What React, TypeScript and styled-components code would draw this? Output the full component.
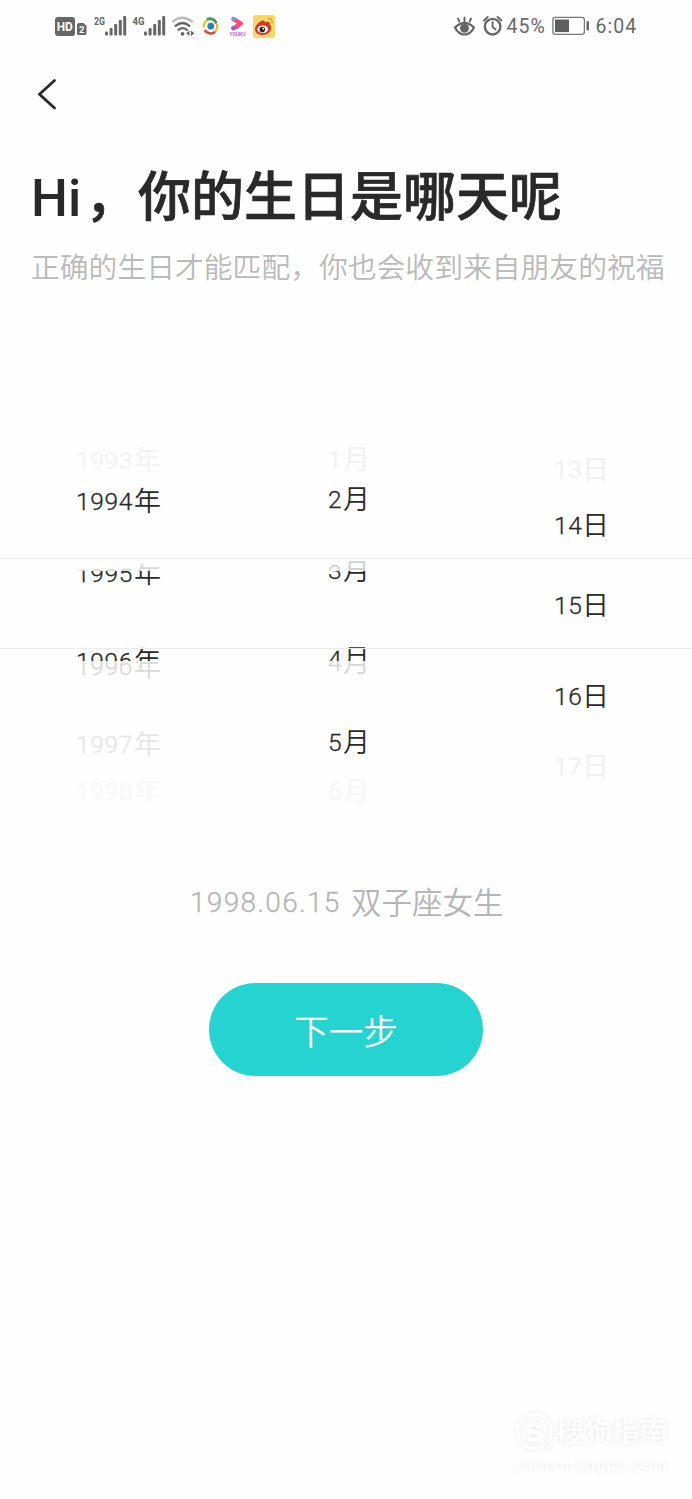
import React from 'react';
import styled, { createGlobalStyle } from 'styled-components';

const GlobalStyle = createGlobalStyle`
  * { box-sizing: border-box; }
  body { margin: 0; background: #fefefe; }
`;

const Screen = styled.main`
  width: 692px;
  height: 1499px;
  overflow: hidden;
  display: flex;
  flex-direction: column;
  background: #fefefe;
  color: #292929;
  font-family: Roboto, 'Noto Sans CJK SC', sans-serif;
`;

const StatusBar = styled.header`
  height: 52px;
  flex: none;
  display: flex;
  justify-content: space-between;
  padding: 0 55px 0 54px;
  color: #666;
`;

const StatusGroup = styled.div`
  display: flex;
  align-items: center;
`;

const StatusText = styled.span<{ $width: number; $inset: number }>`
  width: ${p => p.$width}px;
  padding: 2px 0 0 ${p => p.$inset}px;
  font-size: 19.5px;
  line-height: 52px;
  letter-spacing: 1px;
  white-space: nowrap;
`;

const BackButton = styled.button`
  width: 24px;
  height: 34px;
  margin: 25px 0 0 35px;
  padding: 0;
  border: 0;
  background: none;
  flex: none;
  svg { display: block; }
`;

const Title = styled.h1`
  margin: 50px 0 0 31px;
  height: 76px;
  line-height: 65px;
  font-size: 53px;
  font-weight: 500;
  font-family: 'Noto Sans CJK SC', sans-serif;
  -webkit-text-stroke: 0.7px #292929;
  display: flex;
  white-space: nowrap;
`;

const Greeting = styled.span`
  width: 54px;
  font-family: Roboto, sans-serif;
  font-size: 52px;
  line-height: 75px;
  -webkit-text-stroke: 0;
`;

const Subtitle = styled.p`
  margin: 11px 0 0 31px;
  height: 40px;
  line-height: 36px;
  font-size: 28.8px;
  font-weight: 350;
  font-family: 'Noto Sans CJK SC', sans-serif;
  color: #b9b9b9;
  white-space: nowrap;
`;

const Picker = styled.section`
  position: relative;
  margin-top: 152px;
  height: 380px;
  flex: none;
  display: flex;
`;

const SelectionFrame = styled.div`
  position: absolute;
  left: 0;
  right: 0;
  top: 118px;
  height: 91px;
  border-top: 1px solid #ebebeb;
  border-bottom: 1px solid #ebebeb;
`;

const Wheel = styled.div<{ $width: number; $inset: number }>`
  width: ${p => p.$width}px;
  padding-left: ${p => p.$inset}px;
`;

const Slot = styled.div<{ $height: number }>`
  height: ${p => p.$height}px;
  overflow: hidden;
`;

const SlotLabel = styled.div<{ $shift: number; $tone: string }>`
  margin-top: ${p => p.$shift}px;
  height: 40px;
  line-height: 38px;
  display: flex;
  color: ${p => p.$tone};
  font-size: 27px;
  white-space: nowrap;
`;

const Digits = styled.span<{ $size: number; $spacing: number; $width?: number }>`
  font-size: ${p => p.$size}px;
  font-weight: 300;
  -webkit-text-stroke: 0.3px currentColor;
  letter-spacing: ${p => p.$spacing}px;
  width: ${p => (p.$width ? `${p.$width}px` : 'auto')};
  padding-top: 2px;
`;

const Unit = styled.span`
  font-family: 'Noto Sans CJK SC', sans-serif;
  font-weight: 350;
`;

const Summary = styled.div`
  margin: 62px 0 0 190px;
  height: 40px;
  line-height: 38px;
  display: flex;
  flex: none;
  color: #b5b5b5;
  font-size: 30.5px;
  white-space: nowrap;
`;

const NextButton = styled.button`
  margin: 61px 0 0 209px;
  width: 274px;
  height: 93px;
  flex: none;
  border: 0;
  border-radius: 47px;
  padding: 0;
  background: #25d3d0;
  color: #fff;
  font: 350 34.7px/50px 'Noto Sans CJK SC', sans-serif;
`;

const Watermark = styled.footer`
  margin: auto 0 23px 515px;
  width: 160px;
  color: #fff;
  filter: drop-shadow(0 0 2px rgba(0, 0, 0, 0.09));
`;

const WatermarkBrand = styled.div`
  display: flex;
  align-items: center;
  gap: 2px;
  height: 42px;
  line-height: 38px;
  font-size: 28px;
  font-weight: 500;
  white-space: nowrap;
`;

const WatermarkUrl = styled.div`
  font: 700 14px/22px 'Liberation Sans', sans-serif;
  letter-spacing: 1.9px;
`;

type SlotData = { text: string; unit: string; end: number; center: number; tone: string };

const DARK = '#292929';
const TOP = 440;

const years: SlotData[] = [
  { text: '1993', unit: '年', end: 480, center: 459.5, tone: '#f2f2f2' },
  { text: '1994', unit: '年', end: 530, center: 501, tone: DARK },
  { text: '1995', unit: '年', end: 571, center: 576.5, tone: '#d6d6d6' },
  { text: '1995', unit: '年', end: 600, center: 573.3, tone: DARK },
  { text: '1996', unit: '年', end: 661, center: 661, tone: DARK },
  { text: '1996', unit: '年', end: 700, center: 665.6, tone: '#d9d9d9' },
  { text: '1997', unit: '年', end: 768, center: 744.3, tone: '#e6e6e6' },
  { text: '1998', unit: '年', end: 820, center: 791, tone: '#f7f7f7' },
];

const months: SlotData[] = [
  { text: '1', unit: '月', end: 478, center: 458.7, tone: '#f0f0f0' },
  { text: '2', unit: '月', end: 530, center: 499, tone: DARK },
  { text: '3', unit: '月', end: 571, center: 573, tone: '#d0d0d0' },
  { text: '3', unit: '月', end: 600, center: 570, tone: DARK },
  { text: '4', unit: '月', end: 661, center: 658.6, tone: DARK },
  { text: '4', unit: '月', end: 700, center: 662, tone: '#d6d6d6' },
  { text: '5', unit: '月', end: 766, center: 741.5, tone: DARK },
  { text: '6', unit: '月', end: 820, center: 791, tone: '#f5f5f5' },
];

const days: SlotData[] = [
  { text: '13', unit: '日', end: 495, center: 469.3, tone: '#efefef' },
  { text: '14', unit: '日', end: 556, center: 525.3, tone: DARK },
  { text: '15', unit: '日', end: 650, center: 604.7, tone: DARK },
  { text: '16', unit: '日', end: 730, center: 696.3, tone: DARK },
  { text: '17', unit: '日', end: 820, center: 765.5, tone: '#efefef' },
];

function WheelColumn({ items, width, inset, digitsWidth }: {
  items: SlotData[]; width: number; inset: number; digitsWidth: number;
}) {
  return (
    <Wheel $width={width} $inset={inset}>
      {items.map((item, i) => {
        const start = i === 0 ? TOP : items[i - 1].end;
        return (
          <Slot key={i} $height={item.end - start}>
            <SlotLabel $shift={item.center - start - 20} $tone={item.tone}>
              <Digits $size={24.5} $spacing={0.7} $width={digitsWidth}>{item.text}</Digits>
              <Unit>{item.unit}</Unit>
            </SlotLabel>
          </Slot>
        );
      })}
    </Wheel>
  );
}

const SignalIcons = () => (
  <svg width="224" height="32" viewBox="54 10 224 32" fill="#666">
    <rect x="55" y="17" width="20" height="19" rx="3" />
    <text x="56.8" y="31" fontSize="12" fontWeight="700" fill="#fff" textLength="16" lengthAdjust="spacingAndGlyphs">HD</text>
    <path d="M77 25q0-2 2-2h4.500l3 3v7.500q0 1.500-1.500 1.500h-6.500q-1.500 0-1.500-1.500z" />
    <text x="79" y="33" fontSize="9.500" fontWeight="700" fill="#fff">2</text>
    <text x="94" y="25" fontSize="11" fontWeight="700" textLength="11" lengthAdjust="spacingAndGlyphs">2G</text>
    <text x="132.500" y="25" fontSize="11" fontWeight="700" textLength="12" lengthAdjust="spacingAndGlyphs">4G</text>
    {[105, 144].map(x => (
      <g key={x}>
        <rect x={x} y="31.500" width="3" height="4" rx="1" />
        <rect x={x + 4.6} y="28" width="3" height="7.500" rx="1" />
        <rect x={x + 9.2} y="24" width="3" height="11.500" rx="1" />
        <rect x={x + 13.8} y="20" width="3" height="15.500" rx="1" />
        <rect x={x + 18.2} y="16" width="3" height="19.500" rx="1" />
      </g>
    ))}
    <g fill="none" strokeLinecap="round" strokeWidth="2.200">
      <path d="M173 21.500q9-7.500 19 0" stroke="#bbb" />
      <path d="M175.500 25.800q7-5.600 14 0" stroke="#666" />
      <path d="M178.500 29.800q4-3.200 8.500 0" stroke="#666" />
    </g>
    <circle cx="182.500" cy="33.800" r="1.900" />
    <path d="M189.500 30.500v5.500l-3.300-2.700zM191 30.500v5.500l3.300-2.700z" />
    <g fill="none" strokeWidth="2.600">
      <path d="M204 27.500a6.800 6.800 0 0 1 4-7.800" stroke="#e9c43e" />
      <path d="M207 19.200a7 7 0 0 1 9.500 4.300" stroke="#3d9a4d" />
      <path d="M216.900 24a7 7 0 0 1-3.600 8.500" stroke="#e5c22c" />
      <path d="M215 32a7 7 0 0 1-10.300-2" stroke="#d34c3d" />
    </g>
    <circle cx="210.800" cy="26.200" r="3.400" fill="#2e80bd" />
    <path d="M233.200 28.200l4-1.800" fill="none" stroke="#8d63cc" strokeWidth="4.400" strokeLinecap="round" />
    <path d="M233.500 19l7.300 4.500-4 2.800" fill="none" stroke="#f54b83" strokeWidth="4.400" strokeLinecap="round" strokeLinejoin="round" />
    <path d="M233 18.300l1.200.7" fill="none" stroke="#35b9ea" strokeWidth="2.600" strokeLinecap="round" />
    <text x="229.500" y="35.600" fontSize="5.200" fontWeight="700" fill="#b06fc4" textLength="16" lengthAdjust="spacingAndGlyphs">YOUKU</text>
    <rect x="253" y="15" width="22" height="23" rx="3" fill="#f8d765" />
    <path d="M255 29c0-4 6-9.500 9-8.500 1 .5.600 2 .6 2s4-1.500 5 0c.5 1 0 2 0 2s2 1 1.700 4c-.7 4-5 6.500-9 6.500-4 0-7.300-2.500-7.300-6z" fill="#d93430" />
    <ellipse cx="262.700" cy="29.300" rx="5.300" ry="3.900" fill="#fff" />
    <circle cx="262.300" cy="29.600" r="2.800" fill="#222" />
    <circle cx="263.200" cy="28.700" r=".9" fill="#fff" />
    <path d="M267.500 18.500q5-.5 4.800 4.700" fill="none" stroke="#e6a23b" strokeWidth="1.600" />
  </svg>
);

const EyeAlarmIcons = () => (
  <svg width="52" height="32" viewBox="453 10 52 32" fill="none" stroke="#666" strokeWidth="2.200" strokeLinecap="round">
    <path d="M455 27.500q9.500-9 19 0-3.500 7-9.500 7t-9.500-7z" />
    <circle cx="464.500" cy="28.200" r="3.400" fill="#666" />
    <path d="M464.500 17.500v4M458 18.500l1.300 3M471 18.500l-1.300 3" strokeWidth="1.900" />
    <circle cx="492.600" cy="26.700" r="7.800" strokeWidth="2.400" />
    <path d="M492.600 22v5l3 2.500M484 20.500l3.700-3.500M501.300 20.500l-3.700-3.500" strokeWidth="1.900" />
  </svg>
);

const BatteryIcon = () => (
  <svg width="38" height="20" viewBox="552 16 38 20">
    <rect x="552.900" y="17.300" width="31.500" height="17" rx="2.500" fill="none" stroke="#777" strokeWidth="1.300" />
    <rect x="555" y="19.500" width="14" height="12.600" fill="#5e5e5e" />
    <rect x="586.500" y="21" width="2.500" height="9.500" rx="1" fill="#666" />
  </svg>
);

export default function App() {
  return (
    <Screen>
      <GlobalStyle />
      <StatusBar>
        <StatusGroup><SignalIcons /></StatusGroup>
        <StatusGroup>
          <EyeAlarmIcons />
          <StatusText $width={47} $inset={1.5}>45%</StatusText>
          <BatteryIcon />
          <StatusText $width={47} $inset={5.5}>6:04</StatusText>
        </StatusGroup>
      </StatusBar>
      <BackButton aria-label="返回">
        <svg width="24" height="34" viewBox="0 0 24 34" fill="none" stroke="#292929" strokeWidth="2.800" strokeLinecap="round">
          <path d="M19.500 3.500L4.500 17.300 19.500 31" />
        </svg>
      </BackButton>
      <Title><Greeting>Hi</Greeting>{'\uFF0C你的生日是哪天呢'}</Title>
      <Subtitle>{'正确的生日才能匹配\uFF0C你也会收到来自朋友的祝福'}</Subtitle>
      <Picker>
        <WheelColumn items={years} width={250} inset={76} digitsWidth={58} />
        <WheelColumn items={months} width={250} inset={78} digitsWidth={15} />
        <WheelColumn items={days} width={192} inset={54} digitsWidth={28} />
        <SelectionFrame />
      </Picker>
      <Summary>
        <Digits $size={28} $spacing={1.3} $width={161}>1998.06.15</Digits>
        <Unit>双子座女生</Unit>
      </Summary>
      <NextButton>下一步</NextButton>
      <Watermark>
        <WatermarkBrand>
          <svg width="39" height="40" viewBox="0 0 39 40" fill="none" stroke="#fff" strokeWidth="3">
            <path d="M31 31A17 17 0 1 1 36 22q-.5 4-3 7M32 36l4-4" />
            <path d="M27 14q-7-4-13-1-4 4 5 6t6 6q-5 4-13 0" strokeWidth="4.500" />
          </svg>
          搜狗指南
        </WatermarkBrand>
        <WatermarkUrl>zhinan.sogou.com</WatermarkUrl>
      </Watermark>
    </Screen>
  );
}
